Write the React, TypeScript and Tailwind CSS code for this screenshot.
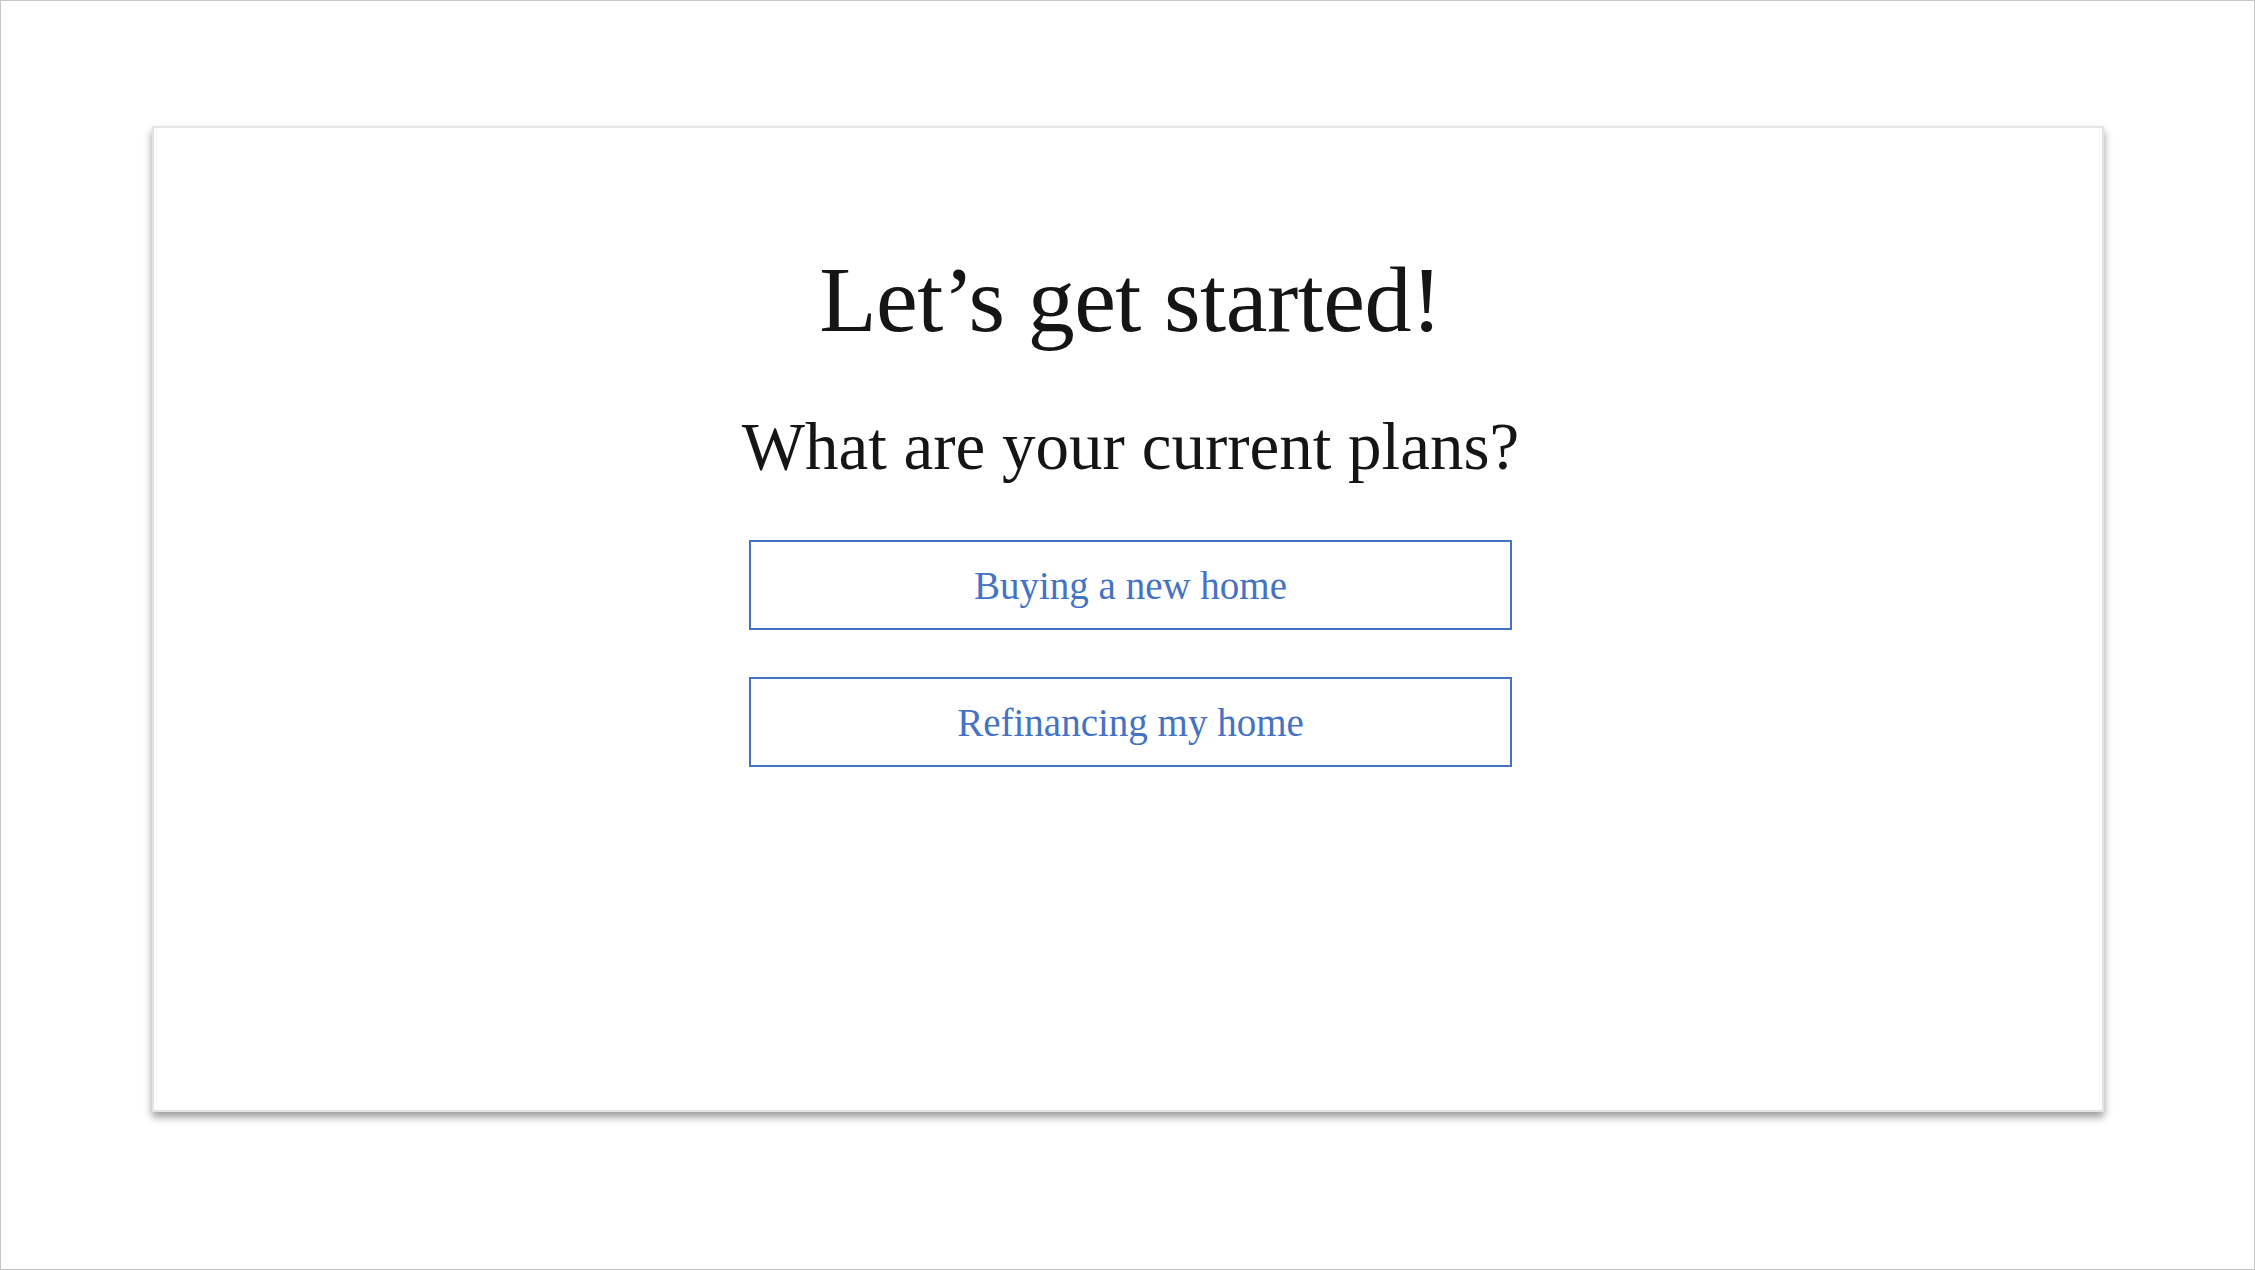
export default function App() {
  const serif = { fontFamily: "'Liberation Serif', 'DejaVu Serif', serif" };

  return (
    <div className="w-[2255px] h-[1270px] bg-white border border-[#c6c6c6] pt-[125px] pl-[151px]">
      {/* Card */}
      <div
        className="w-[1952px] h-[986px] bg-white border-2 border-[#e4e4e4] shadow-[0_5px_8px_rgba(0,0,0,0.4)] flex flex-col items-center pt-[124px] pl-[5px]"
        style={serif}
      >
        <h1 className="text-[94px] leading-none font-normal text-[#151515] tracking-[-0.5px]">
          Let’s get started!
        </h1>
        <h2 className="mt-[67px] text-[67px] leading-none font-normal text-[#151515]">
          What are your current plans?
        </h2>

        <div className="mt-[60px] flex flex-col gap-[47px]">
          <button className="w-[763px] h-[90px] border-2 border-[#4472c4] bg-white text-[#4472c4] text-[39px] leading-none">
            Buying a new home
          </button>
          <button className="w-[763px] h-[90px] border-2 border-[#4472c4] bg-white text-[#4472c4] text-[39px] leading-none">
            Refinancing my home
          </button>
        </div>
      </div>
    </div>
  );
}
